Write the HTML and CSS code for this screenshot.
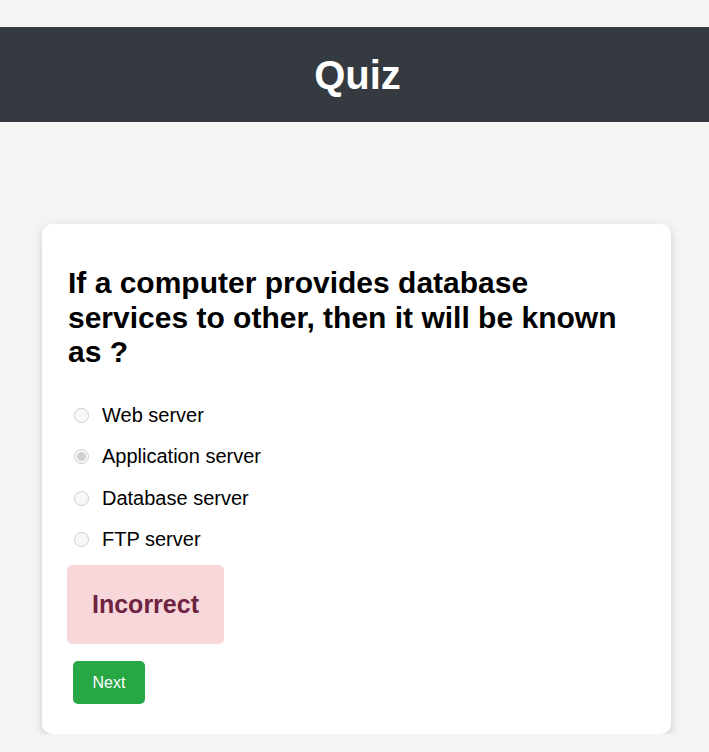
FILE: index.html
```html
<!DOCTYPE html>
<html>
<head>
<meta charset="utf-8">
<title>Quiz</title>
<link rel="stylesheet" href="styles.css">
</head>
<body>
<div class="page">
  <header class="topbar"><h1>Quiz</h1></header>
  <main class="card">
    <h2 class="question">If a computer provides database services to other, then it will be known as ?</h2>
    <div class="options">
      <label class="option"><input type="radio" name="q" disabled><span>Web server</span></label>
      <label class="option"><input type="radio" name="q" checked disabled><span>Application server</span></label>
      <label class="option"><input type="radio" name="q" disabled><span>Database server</span></label>
      <label class="option"><input type="radio" name="q" disabled><span>FTP server</span></label>
    </div>
    <div class="result">Incorrect</div>
    <button class="next">Next</button>
  </main>
</div>
</body>
</html>
```

FILE: styles.css
```css
html, body {
  margin: 0;
  padding: 0;
  background: #f4f4f4;
  font-family: "Liberation Sans", Arial, sans-serif;
}
.page {
  padding-top: 27px;
}
.topbar {
  background: #343a40;
  height: 95px;
  display: flex;
  align-items: center;
  justify-content: center;
}
.topbar h1 {
  margin: 0 0 0 6px;
  color: #ffffff;
  font-size: 40px;
  font-weight: bold;
  line-height: 46px;
}
.card {
  display: block;
  margin: 102px 0 0 42px;
  width: 629px;
  box-sizing: border-box;
  background: #ffffff;
  border-radius: 10px;
  box-shadow: 0 3px 8px rgba(0, 0, 0, 0.16);
  padding: 42px 25px 30px 25px;
  height: 510px;
}
.question {
  margin: 0 0 34px 1px;
  font-size: 30px;
  line-height: 34.5px;
  font-weight: bold;
  color: #000;
}
.options {
  display: flex;
  flex-direction: column;
  gap: 18.5px;
}
.option {
  display: flex;
  align-items: center;
  font-size: 20px;
  line-height: 23px;
  color: #000;
}
.option input {
  width: 15px;
  height: 15px;
  margin: 0 13px 0 7px;
}
.result {
  display: inline-block;
  margin-top: 14px;
  background: #f8d7da;
  color: #6e2341;
  font-size: 25px;
  font-weight: bold;
  line-height: 29px;
  padding: 25px;
  border-radius: 5px;
}
.next {
  display: block;
  margin: 17px 0 0 6px;
  background: #28a745;
  color: #ffffff;
  border: none;
  border-radius: 5px;
  font-family: "Liberation Sans", Arial, sans-serif;
  font-size: 16px;
  width: 72px;
  height: 43px;
  padding: 0;
}
```
